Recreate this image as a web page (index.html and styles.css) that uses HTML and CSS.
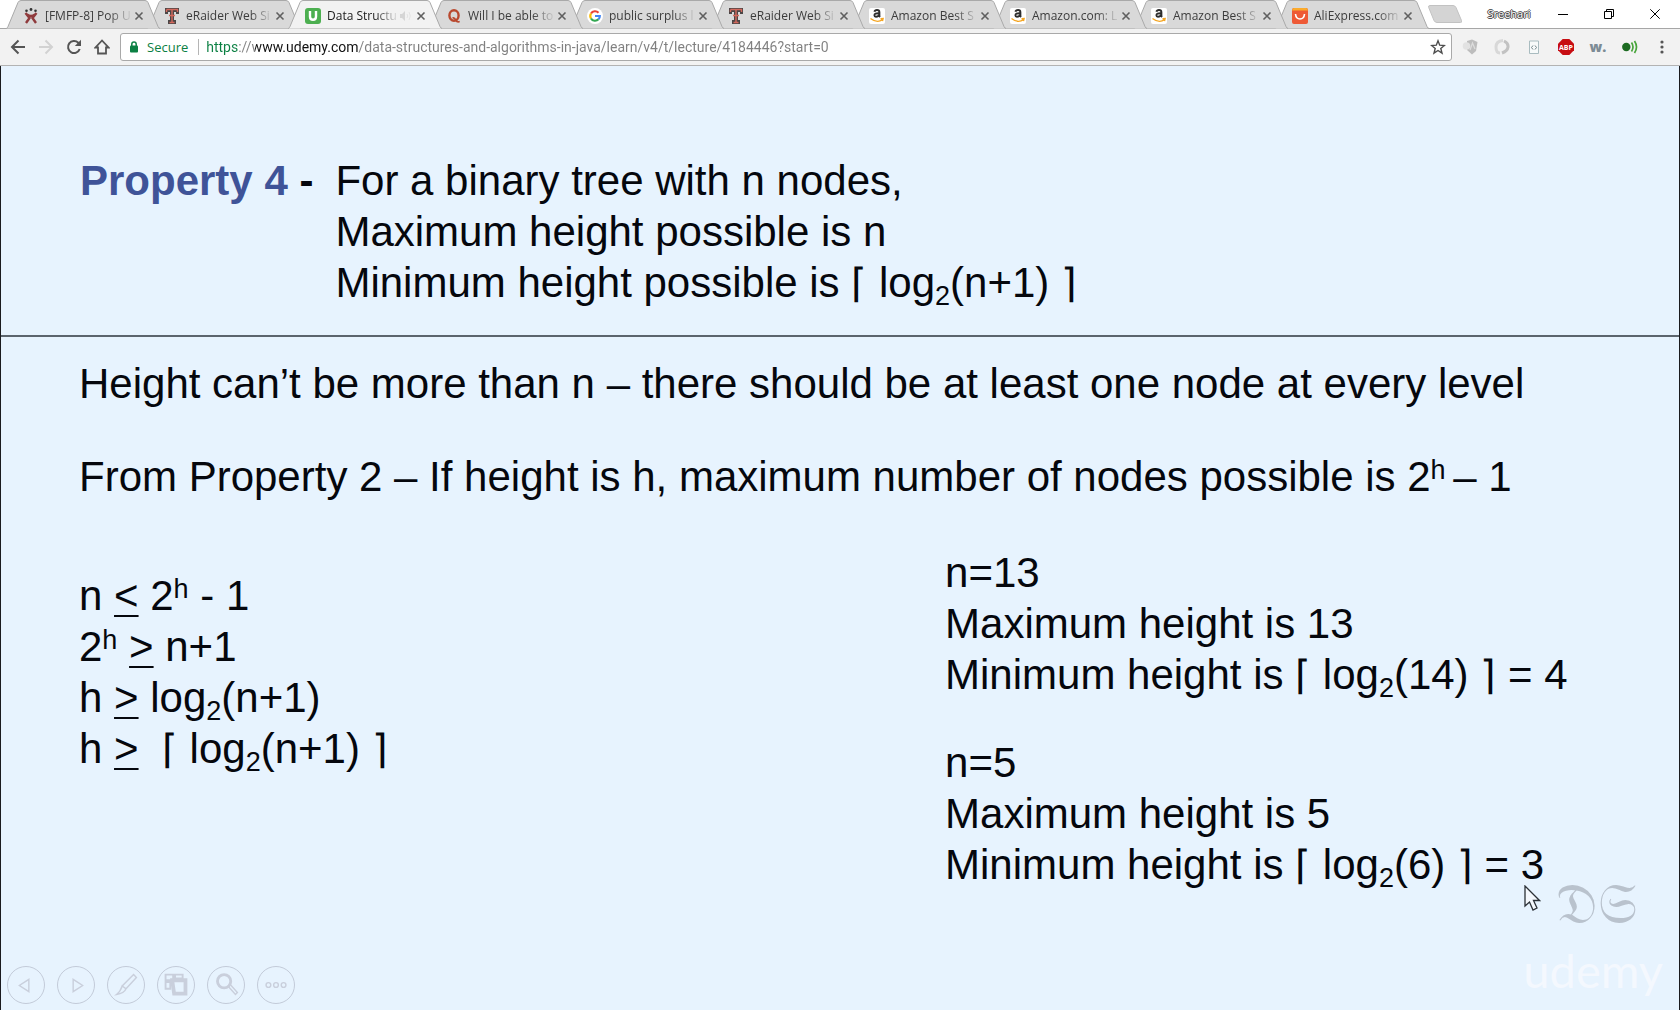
FILE: index.html
```html
<!DOCTYPE html>
<html lang="en">
<head>
<meta charset="utf-8">
<title>Data Structures and Algorithms in Java</title>
<link rel="stylesheet" href="styles.css">
</head>
<body>
<svg class="defs" aria-hidden="true">
  <symbol id="tab-shape" viewBox="0 0 154 29" preserveAspectRatio="none"><path d="M0 28.500C1 28.500 1.500 27.500 2 26.500L12 2.500Q13 .5 15 .5H139Q141 .5 142 2.500L152 26.500Q153 28.500 154 28.500" stroke="#a9a9a9"/></symbol>
  <symbol id="close" viewBox="0 0 10 10"><path d="M1.500 1.500l7 7M8.500 1.500l-7 7" stroke="#5f5f5f" stroke-width="1.600"/></symbol>
  <symbol id="fav-tt" viewBox="0 0 16 16"><path d="M1 0h14v6h-3V4h-2v8h2v4H4v-4h2V4H4v2H1z" fill="#4b4646"/><path d="M2.500 1.500h11v2.500M2.500 4V1.500M8 2v12M5 7.500h6M5.500 14.500h5" stroke="#d4685c" stroke-width="1.400" fill="none"/></symbol>
  <symbol id="fav-amazon" viewBox="0 0 16 16"><rect width="16" height="16" rx="2" fill="#fff"/><path d="M5.400 3.800Q5.800 2 8 2q2.400 0 2.400 2.300v3.200q0 .9.700 1.500M10 5.200Q5.400 5 5.400 7.300q0 1.500 1.500 1.500Q9.500 8.800 10 6.500" fill="none" stroke="#2d2d2d" stroke-width="1.900"/><path d="M1.500 10.500q6.500 5 12 1.200M11.500 10.800l2.600-.2-.6 2.600" fill="none" stroke="#f5a623" stroke-width="1.400"/></symbol>
</svg>

<header class="browser">
  <div class="titlebar">
    <nav class="tabs" aria-label="Open tabs">
      <div class="tab z9"><svg class="shape"><use href="#tab-shape"/></svg>
        <svg class="fav" viewBox="0 0 16 16"><g fill="#333"><circle cx="3.500" cy="2.800" r="1.300"/><circle cx="8" cy="1.500" r="1.400"/><circle cx="12.500" cy="2.800" r="1.300"/></g><path d="M2.500 5l4 5-3.500 5M13.500 5l-4 5 3.500 5M4 6.500q4 3 8 0" fill="none" stroke="#8f3a3c" stroke-width="2.400"/></svg>
        <a class="label" href="#">[FMFP-8] Pop U</a><button class="x" aria-label="Close tab"><svg><use href="#close"/></svg></button></div>
      <div class="tab z8"><svg class="shape"><use href="#tab-shape"/></svg>
        <svg class="fav"><use href="#fav-tt"/></svg>
        <a class="label" href="#">eRaider Web Si</a><button class="x" aria-label="Close tab"><svg><use href="#close"/></svg></button></div>
      <div class="tab active"><svg class="shape"><use href="#tab-shape"/></svg>
        <svg class="fav" viewBox="0 0 16 16"><rect width="16" height="16" rx="3" fill="#4caf50"/><path d="M5 3v5.500q0 3.300 3 3.300t3-3.300V3" fill="none" stroke="#fff" stroke-width="2.400"/></svg>
        <a class="label" href="#">Data Structu</a>
        <svg class="sound" viewBox="0 0 11 10"><path d="M0 3h2l3-3v10L2 7H0z" fill="#d5d5d5"/><path d="M7 3q1.500 2 0 4M9 1q2.500 4 0 8" fill="none" stroke="#e3e3e3"/></svg>
        <button class="x" aria-label="Close tab"><svg><use href="#close"/></svg></button></div>
      <div class="tab z7"><svg class="shape"><use href="#tab-shape"/></svg>
        <svg class="fav" viewBox="0 0 16 16"><ellipse cx="8" cy="7.500" rx="4.600" ry="5.200" fill="none" stroke="#b9492f" stroke-width="2.400"/><path d="M6.500 10q2-.8 3.200 2 1.300 2.500 4 1.500" fill="none" stroke="#b9492f" stroke-width="1.700"/></svg>
        <a class="label" href="#">Will I be able to</a><button class="x" aria-label="Close tab"><svg><use href="#close"/></svg></button></div>
      <div class="tab z6"><svg class="shape"><use href="#tab-shape"/></svg>
        <svg class="fav" viewBox="0 0 16 16"><circle cx="8" cy="8" r="8" fill="#fff"/><g fill="none" stroke-width="2.200"><path d="M4 5.500A4.800 4.800 0 0 1 11.500 4.700" stroke="#ea4335"/><path d="M4 10.500a4.800 4.800 0 0 1 0-5" stroke="#fbbc05"/><path d="M11.500 11.300A4.800 4.800 0 0 1 4 10.500" stroke="#34a853"/><path d="M8 8h4.800q0 2-1.300 3.300" stroke="#4285f4"/></g></svg>
        <a class="label" href="#">public surplus l</a><button class="x" aria-label="Close tab"><svg><use href="#close"/></svg></button></div>
      <div class="tab z5"><svg class="shape"><use href="#tab-shape"/></svg>
        <svg class="fav"><use href="#fav-tt"/></svg>
        <a class="label" href="#">eRaider Web Si</a><button class="x" aria-label="Close tab"><svg><use href="#close"/></svg></button></div>
      <div class="tab z4"><svg class="shape"><use href="#tab-shape"/></svg>
        <svg class="fav"><use href="#fav-amazon"/></svg>
        <a class="label" href="#">Amazon Best S</a><button class="x" aria-label="Close tab"><svg><use href="#close"/></svg></button></div>
      <div class="tab z3"><svg class="shape"><use href="#tab-shape"/></svg>
        <svg class="fav"><use href="#fav-amazon"/></svg>
        <a class="label" href="#">Amazon.com: L</a><button class="x" aria-label="Close tab"><svg><use href="#close"/></svg></button></div>
      <div class="tab z2"><svg class="shape"><use href="#tab-shape"/></svg>
        <svg class="fav"><use href="#fav-amazon"/></svg>
        <a class="label" href="#">Amazon Best S</a><button class="x" aria-label="Close tab"><svg><use href="#close"/></svg></button></div>
      <div class="tab z1"><svg class="shape"><use href="#tab-shape"/></svg>
        <svg class="fav" viewBox="0 0 16 16"><rect width="16" height="16" rx="2" fill="#ee5a36"/><path d="M2 0h12q2 0 2 2.500H0Q0 0 2 0" fill="#fbab2c"/><path d="M3.500 6q.5 5 4.500 5t4.500-5" fill="none" stroke="#fff" stroke-width="1.600"/></svg>
        <a class="label" href="#">AliExpress.com</a><button class="x" aria-label="Close tab"><svg><use href="#close"/></svg></button></div>
      <button class="newtab" aria-label="New tab"><svg viewBox="0 0 34 18"><path d="M2 .5h23q2 0 3 2l5.500 13q1 2-1 2H9q-2 0-3-2L.7 2.500Q0 .5 2 .5" fill="#d4d4d4" stroke="#c2c2c2"/></svg></button>
    </nav>
    <div class="window">
      <button class="user">Sreehari</button>
      <button class="win" aria-label="Minimize"><svg viewBox="0 0 10 10"><path d="M0 5.500h10" stroke="#000"/></svg></button>
      <button class="win" aria-label="Restore"><svg viewBox="0 0 10 10"><path d="M.5 2.500h7v7h-7zM2.500 2.500v-2h7v7h-2" fill="none" stroke="#000"/></svg></button>
      <button class="win" aria-label="Close window"><svg viewBox="0 0 10 10"><path d="M.3.300l9.400 9.400M9.700.300L.3 9.700" stroke="#000"/></svg></button>
    </div>
  </div>
  <div class="toolbar">
    <div class="moves">
      <button aria-label="Back"><svg viewBox="0 0 16 16"><path d="M15 8H2.500M8.500 1.500L2 8l6.500 6.500" fill="none" stroke="#555" stroke-width="2"/></svg></button>
      <button aria-label="Forward"><svg viewBox="0 0 16 16"><path d="M1 8h12.500M7.500 1.500L14 8l-6.500 6.500" fill="none" stroke="#d2d2d2" stroke-width="2"/></svg></button>
      <button aria-label="Reload"><svg viewBox="0 0 16 16"><path d="M13.700 10A6 6 0 1 1 12.300 3.800L14 5.500" fill="none" stroke="#555" stroke-width="2"/><path d="M15 .8V7H8.800z" fill="#555"/></svg></button>
      <button aria-label="Home"><svg viewBox="0 0 16 16"><path d="M8 1.500L1.500 8.500H4V14.500h8V8.500h2.500z" fill="none" stroke="#555" stroke-width="1.800"/></svg></button>
    </div>
    <div class="omnibox">
      <svg class="lock" viewBox="0 0 8 12"><path d="M1.800 5V3.200a2.200 2.200 0 0 1 4.400 0V5" fill="none" stroke="#0b8043" stroke-width="1.500"/><rect y="4.500" width="8" height="7" rx="1" fill="#0b8043"/></svg>
      <label class="secure" for="url">Secure</label>
      <input id="url" class="url" type="text" spellcheck="false" value="https://www.udemy.com/data-structures-and-algorithms-in-java/learn/v4/t/lecture/4184446?start=0">
      <button class="star" aria-label="Bookmark"><svg viewBox="0 0 16 16"><path d="M8 1.800l1.700 4.400 4.700.3-3.600 3 1.200 4.600L8 11.500l-4 2.600 1.200-4.600-3.600-3 4.700-.3z" fill="none" stroke="#4d4d4d" stroke-width="1.400"/></svg></button>
    </div>
    <div class="extensions">
      <button aria-label="Angular"><svg viewBox="0 0 16 16"><path d="M5 2l5-1.500L15.500 3l-1.500 9-4 3.500L5 11z" fill="#bdbdbd"/><circle cx="4.500" cy="7" r="3.800" fill="#e2e2e2"/><path d="M8 11l2.500-7 2.500 6" fill="none" stroke="#dcdcdc" stroke-width="1.300"/></svg></button>
      <button aria-label="Spinner"><svg viewBox="0 0 16 16"><path d="M9 1.500Q2 2 2 8t4 6" fill="none" stroke="#d8d8d8" stroke-width="3"/><path d="M10 2q4.500 2 4 6t-6 6" fill="none" stroke="#c2c2c2" stroke-width="3"/></svg></button>
      <button aria-label="Code"><svg viewBox="0 0 16 16"><path d="M3.500 2h9v12.500h-9z" fill="#f7fafa" stroke="#a9bcc0"/><path d="M7 6.500L5.500 8.500 7 10.500M9 6.500l1.500 2-1.500 2" fill="none" stroke="#72858a"/></svg></button>
      <button aria-label="Adblock"><svg viewBox="0 0 16 16"><path d="M4.700 0h6.600L16 4.700v6.600L11.300 16H4.700L0 11.300V4.700z" fill="#c70d12"/><text x="8" y="11" class="abp">ABP</text></svg></button>
      <button class="w" aria-label="Wappalyzer">w.</button>
      <button aria-label="Connected"><svg viewBox="0 0 16 16"><circle cx="4.300" cy="8" r="4.200" fill="#1d6b22"/><path d="M9.500 3.500q3 4.500 0 9M12.500 2q4 6 0 12" fill="none" stroke="#48a53b" stroke-width="1.700"/></svg></button>
      <button aria-label="Menu"><svg viewBox="0 0 16 16"><g fill="#555"><circle cx="8" cy="3" r="1.600"/><circle cx="8" cy="8" r="1.600"/><circle cx="8" cy="13" r="1.600"/></g></svg></button>
    </div>
  </div>
</header>

<main class="slide">
  <section class="property">
    <h1 class="name"><span class="blue">Property 4</span> -</h1>
    <div>
      <p>For a binary tree with n nodes,</p>
      <p>Maximum height possible is n</p>
      <p>Minimum height possible is <span class="ceil">⌈</span> log<sub>2</sub>(n+1) <span class="ceil">⌉</span></p>
    </div>
  </section>
  <hr class="rule">
  <section class="notes">
    <p>Height can’t be more than n – there should be at least one node at every level</p>
    <p>From Property 2 – If height is h, maximum number of nodes possible is 2<sup>h </sup>– 1</p>
  </section>
  <section class="columns">
    <div class="proof">
      <p>n <u>&lt;</u> 2<sup>h</sup> - 1</p>
      <p>2<sup>h</sup> <u>&gt;</u> n+1</p>
      <p>h <u>&gt;</u> log<sub>2</sub>(n+1)</p>
      <p>h <u>&gt;</u>&nbsp; <span class="ceil">⌈</span> log<sub>2</sub>(n+1) <span class="ceil">⌉</span></p>
    </div>
    <div class="examples">
      <div>
        <p>n=13</p>
        <p>Maximum height is 13</p>
        <p>Minimum height is <span class="ceil">⌈</span> log<sub>2</sub>(14) <span class="ceil">⌉</span> = 4</p>
      </div>
      <div>
        <p>n=5</p>
        <p>Maximum height is 5</p>
        <p>Minimum height is <span class="ceil">⌈</span> log<sub>2</sub>(6) <span class="ceil">⌉</span> = 3</p>
      </div>
    </div>
  </section>
  <nav class="controls" aria-label="Slide controls">
    <button aria-label="Previous"><svg viewBox="0 0 38 38"><path d="M22 13v13l-10-6.500z"/></svg></button>
    <button aria-label="Next"><svg viewBox="0 0 38 38"><path d="M16 13v13l10-6.500z"/></svg></button>
    <button aria-label="Pen"><svg viewBox="0 0 38 38"><path d="M27 8l3 3-11 12-4-3zM15 20l4 3q-2 5-10 6 4-3 6-9z"/></svg></button>
    <button aria-label="All slides"><svg viewBox="0 0 38 38"><path d="M8 8h8v6H8zM18 8h8v4h-8zM8 16h5v7H8z" stroke-width="2"/><path d="M15 14h14v14H17z" stroke-width="4"/></svg></button>
    <button aria-label="Zoom"><svg viewBox="0 0 38 38"><circle cx="17" cy="15" r="7" stroke-width="3"/><path d="M21 20l8 9 2-2-8-9"/></svg></button>
    <button aria-label="More"><svg viewBox="0 0 38 38"><circle cx="11" cy="19" r="2.500"/><circle cx="19" cy="19" r="2.500"/><circle cx="27" cy="19" r="2.500"/></svg></button>
  </nav>
  <div class="marks">
    <span class="ds">𝔇𝔖</span>
    <span class="udemy">udemy</span>
  </div>
  <svg class="cursor" viewBox="0 0 17 26"><path d="M1 1v20l4.500-4 3.500 8 4-2-3.500-7.500h6z" fill="#f4f8fd" stroke="#2b3036" stroke-width="1.300"/></svg>
</main>
</body>
</html>
```
FILE: styles.css
```css
* { box-sizing: border-box; }

body {
  margin: 0;
  min-height: 100vh;
  display: flex;
  flex-direction: column;
  font-family: "Open Sans", "Noto Sans", sans-serif;
  background: #fff;
}

button {
  padding: 0;
  border: 0;
  background: none;
  font: inherit;
  display: flex;
  align-items: center;
  justify-content: center;
}

p, h1 { margin: 0; }
.defs { display: none; }

/* Tab strip */
.titlebar {
  display: flex;
  justify-content: space-between;
  height: 29px;
  border-bottom: 1px solid #a6a6a6;
}

.tabs {
  display: flex;
  flex: 0 1 1480px;
  min-width: 0;
  padding-left: 6px;
}

.tab {
  position: relative;
  display: flex;
  align-items: center;
  flex: 0 1 154px;
  min-width: 0;
  height: 29px;
  margin-right: -13px;
  padding: 2px 16px 0 17px;
  font-size: 12px;
  color: #3c3c3c;
}

.shape {
  position: absolute;
  inset: 0;
  width: 100%;
  height: 100%;
  fill: #d9d9d9;
}

.active { z-index: 10; color: #1a1a1a; }
.active .shape { fill: #f2f2f2; }
.z9 { z-index: 9; }
.z8 { z-index: 8; }
.z7 { z-index: 7; }
.z6 { z-index: 6; }
.z5 { z-index: 5; }
.z4 { z-index: 4; }
.z3 { z-index: 3; }
.z2 { z-index: 2; }
.z1 { z-index: 1; }

.fav {
  position: relative;
  flex: none;
  width: 16px;
  height: 16px;
}

.label {
  position: relative;
  flex: 1;
  min-width: 0;
  margin: 0 1px 0 6px;
  white-space: nowrap;
  color: inherit;
  text-decoration: none;
  mask-image: linear-gradient(to left, rgb(0 0 0 / 15%) 4px, #000 24px);
}

.sound {
  position: relative;
  flex: none;
  width: 11px;
  height: 10px;
  margin-right: 5px;
}

.x { position: relative; }
.x svg { width: 10px; height: 10px; }

.newtab { margin-left: 12px; }
.newtab svg { width: 34px; height: 18px; }

.window {
  display: flex;
  align-items: center;
  margin-right: 2px;
}

.user {
  width: 44px;
  margin-right: 9px;
  font-size: 11px;
  line-height: 14px;
  color: #fff;
  text-shadow: 1px 0 #444, -1px 0 #444, 0 1px #444, 0 -1px #444;
}

.win { width: 46px; height: 26px; }
.win svg { width: 10px; height: 10px; }

/* Toolbar */
.toolbar {
  display: flex;
  align-items: center;
  height: 37px;
  padding: 0 10px;
  background: #f2f2f2;
  border-bottom: 1px solid #b3b3b3;
}

.moves {
  display: flex;
  gap: 12px;
  margin-right: 10px;
}

.moves svg { width: 16px; height: 16px; }

.omnibox {
  display: flex;
  align-items: center;
  flex: 1;
  min-width: 0;
  height: 28px;
  padding: 0 5px 0 9px;
  background: #fff;
  border: 1px solid #a9a9a9;
  border-radius: 3px;
  font-size: 13px;
}

.lock { width: 8px; height: 12px; margin-right: 9px; }

.secure {
  padding-right: 10px;
  border-right: 1px solid #b5b5b5;
  line-height: 16px;
  color: #0b8043;
}

.url {
  flex: 1;
  min-width: 0;
  padding: 0 0 0 7px;
  border: 0;
  outline: 0;
  font: 14px Roboto, sans-serif;
  color: transparent;
  background: linear-gradient(to right, #0b8043 40px, #808080 40px, #808080 56px, #111 56px, #111 160px, #808080 160px);
  background-clip: text;
  -webkit-background-clip: text;
}

.star svg { width: 16px; height: 16px; }

.extensions {
  display: flex;
  gap: 16px;
  margin-left: 10px;
}

.extensions svg { width: 16px; height: 16px; }

.abp {
  font: 700 7px "Open Sans", sans-serif;
  fill: #fff;
  text-anchor: middle;
}

.w {
  width: 16px;
  height: 16px;
  font-size: 14px;
  font-weight: 800;
  line-height: 16px;
  color: #7c8b95;
}

/* Slide */
.slide {
  position: relative;
  flex: 1;
  display: flex;
  flex-direction: column;
  padding-top: 89px;
  background: #e7f3fe;
  border: solid #1a1a1e;
  border-width: 0 1px;
  font: 42px/51px "Liberation Sans", Arial, sans-serif;
  color: #05070d;
}

.property {
  display: flex;
  gap: 22px;
  padding-left: 79px;
}

.name { font: inherit; font-weight: 700; }
.blue { color: #3f5398; }

.rule {
  width: 100%;
  height: 2px;
  margin: 27px 0 21px;
  border: 0;
  background: #5b646d;
}

.notes {
  display: flex;
  flex-direction: column;
  gap: 42px;
  padding-left: 78px;
}

.columns {
  display: grid;
  grid-template-columns: 59fr 50fr;
  padding: 45px 0 0 78px;
}

.proof { padding-top: 23px; }

.examples {
  display: flex;
  flex-direction: column;
  gap: 37px;
}

.ceil { font-size: 40px; line-height: 0; }

sub, sup { font-size: 27px; line-height: 0; }
sub { vertical-align: -8px; }
sup { vertical-align: 12px; }

u {
  text-decoration-thickness: 2px;
  text-underline-offset: 5px;
}

.controls {
  display: flex;
  gap: 12px;
  margin-top: auto;
  padding: 0 0 6px 6px;
}

.controls svg {
  width: 38px;
  height: 38px;
  border: 1px solid #c3cbd9;
  border-radius: 50%;
  fill: none;
  stroke: #c9cfdc;
  stroke-width: 1.500;
}

.marks {
  position: absolute;
  right: 16px;
  bottom: 8px;
  display: flex;
  flex-direction: column;
  align-items: flex-end;
}

.ds {
  padding-right: 26px;
  font: 56px/68px "DejaVu Sans", "DejaVu Serif", serif;
  color: #b9c2cd;
}

.udemy {
  font: 47px/64px Lato, sans-serif;
  color: #f4f8fe;
}

.cursor {
  position: absolute;
  right: 138px;
  bottom: 99px;
  width: 17px;
  height: 26px;
}
```
